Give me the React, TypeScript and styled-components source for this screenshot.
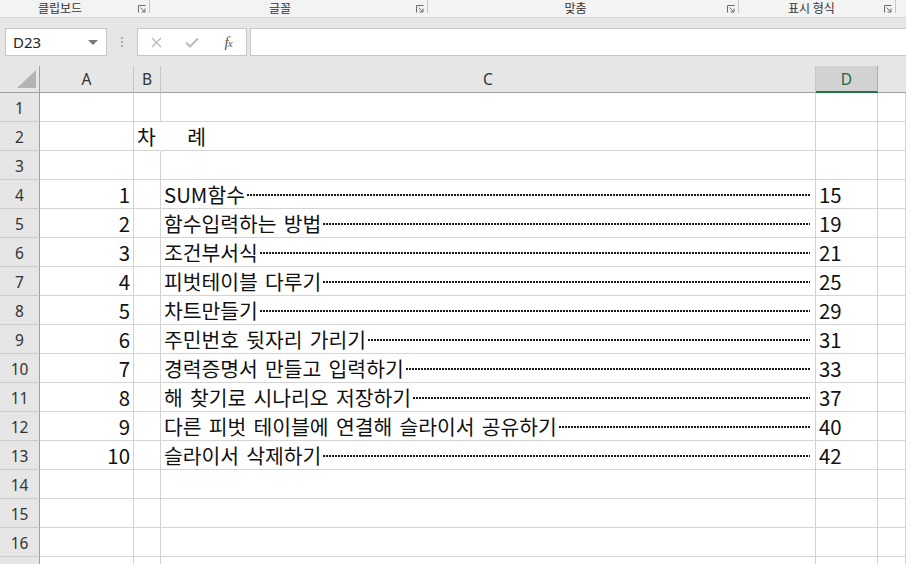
import React from 'react';
import styled, { createGlobalStyle, css } from 'styled-components';

const Global = createGlobalStyle`
  html, body { margin: 0; padding: 0; background: #fff; overflow: hidden; }
  body { font-family: "Noto Sans", "Noto Sans CJK KR", sans-serif; }
  * { box-sizing: border-box; }
`;

const Page = styled.div`
  width: 906px;
  height: 564px;
  overflow: hidden;
  display: flex;
  flex-direction: column;
  background: #fff;
`;

/* ---------- Ribbon group labels ---------- */
const Ribbon = styled.div`
  height: 18px;
  flex: none;
  display: flex;
  background: #f3f3f3;
  border-bottom: 1px solid #d6d6d6;
`;

const RibbonGroup = styled.div<{ $w: number }>`
  width: ${(p) => p.$w}px;
  flex: none;
  display: flex;
  align-items: flex-start;
`;

const RibbonLabel = styled.div<{ $shift: number }>`
  flex: 1;
  text-align: center;
  font-family: "Noto Sans CJK KR", sans-serif;
  font-size: 12px;
  line-height: 17px;
  color: #333;
  padding-right: ${(p) => p.$shift}px;
  margin-top: -1px;
`;

const Launcher = styled.svg`
  width: 8px;
  height: 8px;
  flex: none;
  margin-top: 5px;
`;

const GroupSep = styled.div`
  width: 1px;
  height: 13px;
  flex: none;
  margin-left: 3px;
  background: #c6c6c6;
`;

/* ---------- Formula bar ---------- */
const FormulaArea = styled.div`
  height: 48px;
  flex: none;
  display: flex;
  align-items: center;
  padding-left: 5px;
  background: #e6e6e6;
`;

const NameBox = styled.div`
  width: 102px;
  height: 28px;
  flex: none;
  background: #fff;
  border: 1px solid #c6c6c6;
  display: flex;
  align-items: center;
  justify-content: space-between;
  padding: 0 8px 0 7px;
  font-size: 15px;
  color: #262626;
`;

const DropArrow = styled.span`
  width: 0;
  height: 0;
  border-left: 5px solid transparent;
  border-right: 5px solid transparent;
  border-top: 5px solid #7a7a7a;
`;

const Grip = styled.div`
  width: 30px;
  flex: none;
  display: flex;
  flex-direction: column;
  align-items: center;
  gap: 2px;
  span { width: 2px; height: 2px; background: #a9a9a9; }
`;

const FxBox = styled.div`
  width: 110px;
  height: 28px;
  flex: none;
  background: #fff;
  border: 1px solid #c6c6c6;
  display: grid;
  grid-template-columns: repeat(3, 1fr);
  align-items: center;
  justify-items: center;
`;

const Fx = styled.span`
  font-family: "Liberation Serif", serif;
  font-style: italic;
  font-size: 15px;
  color: #555;
  letter-spacing: -1px;
  small { font-size: 11px; }
`;

const FormulaInput = styled.div`
  flex: 1;
  height: 28px;
  margin-left: 3px;
  background: #fff;
  border: 1px solid #c6c6c6;
  border-right: none;
`;

/* ---------- Sheet grid ---------- */
const Sheet = styled.div`
  flex: 1;
  display: grid;
  grid-template-columns: 40px 94px 27px 655px 62px 1fr;
  grid-template-rows: 27px;
  grid-auto-rows: 29px;
  overflow: hidden;
`;

const Corner = styled.div`
  background: #e6e6e6;
  border-right: 1px solid #a0a0a0;
  border-bottom: 1px solid #a0a0a0;
  position: relative;
  &::after {
    content: "";
    position: absolute;
    right: 3px;
    bottom: 4px;
    width: 0;
    height: 0;
    border-left: 19px solid transparent;
    border-bottom: 18px solid #b4b4b4;
  }
`;

const ColHead = styled.div<{ $sel?: boolean; $last?: boolean }>`
  background: ${(p) => (p.$sel ? '#d2d2d2' : '#e6e6e6')};
  border-right: 1px solid ${(p) => (p.$sel ? '#ababab' : '#c6c6c6')};
  border-bottom: 1px solid #a0a0a0;
  display: flex;
  align-items: center;
  justify-content: center;
  font-size: 15.5px;
  color: ${(p) => (p.$sel ? '#1d6a3f' : '#333')};
  ${(p) =>
    p.$sel &&
    css`
      border-bottom: 2px solid #217346;
      padding-top: 1px;
    `}
  ${(p) => p.$last && css`border-right: none;`}
`;

const RowHead = styled.div`
  background: #e6e6e6;
  border-right: 1px solid #a0a0a0;
  border-bottom: 1px solid #cbcbcb;
  display: flex;
  align-items: center;
  justify-content: center;
  font-size: 15.5px;
  color: #333;
  padding-top: 1px;
`;

const Cell = styled.div<{ $align?: 'left' | 'right'; $open?: boolean }>`
  border-right: 1px solid ${(p) => (p.$open ? 'transparent' : '#d4d4d4')};
  border-bottom: 1px solid #d4d4d4;
  display: flex;
  align-items: center;
  justify-content: ${(p) => (p.$align === 'right' ? 'flex-end' : 'flex-start')};
  padding: 0 3px 0 3px;
  font-family: "Noto Sans CJK KR", sans-serif;
  font-size: 20.4px;
  color: #111;
  white-space: pre;
  overflow: visible;
  position: relative;
  z-index: ${(p) => (p.$open ? 1 : 0)};
`;

const TitleCell = styled(Cell)`
  word-spacing: 0.7px;
`;

const TocCell = styled(Cell)`
  padding: 0 5px 0 3px;
  word-spacing: 2.7px;
`;

const Leader = styled.span`
  flex: 1;
  height: 2px;
  margin-left: 2px;
  margin-top: 2px;
  background-image: repeating-linear-gradient(
    to right,
    #1a1a1a 0 1.7px,
    transparent 1.7px 3px
  );
`;

const entries: [number, string, number][] = [
  [1, 'SUM함수', 15],
  [2, '함수입력하는 방법', 19],
  [3, '조건부서식', 21],
  [4, '피벗테이블 다루기', 25],
  [5, '차트만들기', 29],
  [6, '주민번호 뒷자리 가리기', 31],
  [7, '경력증명서 만들고 입력하기', 33],
  [8, '해 찾기로 시나리오 저장하기', 37],
  [9, '다른 피벗 테이블에 연결해 슬라이서 공유하기', 40],
  [10, '슬라이서 삭제하기', 42],
];

const groups = [
  { label: '클립보드', w: 150, shift: 18 },
  { label: '글꼴', w: 278, shift: 6 },
  { label: '맞춤', w: 311, shift: 4 },
  { label: '표시 형식', w: 157, shift: 0 },
];

const LauncherIcon = () => (
  <Launcher viewBox="0 0 8 8" fill="none" stroke="#6a6a6a" strokeWidth="1">
    <path d="M0.5 7.5V0.5h7" />
    <path d="M2.5 2.5l4.5 4.5" />
    <path d="M7 3.5v3.5H3.5" />
  </Launcher>
);

function Row({ n }: { n: number }) {
  const e = n >= 4 && n <= 13 ? entries[n - 4] : null;
  return (
    <>
      <RowHead>{n <= 16 ? n : ''}</RowHead>
      <Cell $align="right">{e ? e[0] : ''}</Cell>
      {n === 2 ? <TitleCell $open>{'차      례'}</TitleCell> : <Cell />}
      {e ? (
        <TocCell>
          <span>{e[1]}</span>
          <Leader />
        </TocCell>
      ) : (
        <Cell />
      )}
      <Cell>{e ? e[2] : ''}</Cell>
      <Cell />
    </>
  );
}

export default function App() {
  const rows = Array.from({ length: 17 }, (_, i) => i + 1);
  return (
    <Page>
      <Global />
      <Ribbon>
        {groups.map((g) => (
          <RibbonGroup key={g.label} $w={g.w}>
            <RibbonLabel $shift={g.shift}>{g.label}</RibbonLabel>
            <LauncherIcon />
            <GroupSep />
          </RibbonGroup>
        ))}
      </Ribbon>
      <FormulaArea>
        <NameBox>
          <span>D23</span>
          <DropArrow />
        </NameBox>
        <Grip>
          <span />
          <span />
          <span />
        </Grip>
        <FxBox>
          <svg width="11" height="11" viewBox="0 0 11 11" stroke="#b9b9b9" strokeWidth="1.3" fill="none">
            <path d="M1 1l9 9M10 1l-9 9" />
          </svg>
          <svg width="14" height="11" viewBox="0 0 14 11" stroke="#bdbdbd" strokeWidth="2.2" fill="none">
            <path d="M1 5.5l4 4L13 1.5" />
          </svg>
          <Fx>
            f<small>x</small>
          </Fx>
        </FxBox>
        <FormulaInput />
      </FormulaArea>
      <Sheet>
        <Corner />
        <ColHead>A</ColHead>
        <ColHead>B</ColHead>
        <ColHead>C</ColHead>
        <ColHead $sel>D</ColHead>
        <ColHead $last />
        {rows.map((n) => (
          <Row key={n} n={n} />
        ))}
      </Sheet>
    </Page>
  );
}
